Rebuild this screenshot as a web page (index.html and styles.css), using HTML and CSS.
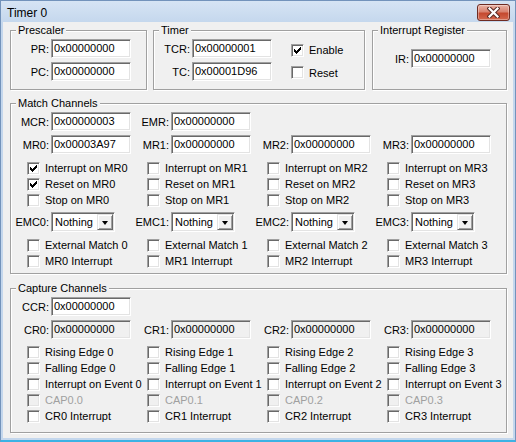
FILE: index.html
```html
<!DOCTYPE html>
<html>
<head>
<meta charset="utf-8">
<title>Timer 0</title>
<link rel="stylesheet" href="styles.css">
</head>
<body>
<div class="window">
  <div class="titlebar">
    <span class="title">Timer 0</span>
    <div class="close">
      <svg width="13" height="11" viewBox="0 0 13 11">
        <path d="M2.5 1.5 L10.5 9.5 M10.5 1.5 L2.5 9.5" stroke="#5a2a24" stroke-width="4.2" stroke-linecap="square" fill="none"/>
        <path d="M2.5 1.5 L10.5 9.5 M10.5 1.5 L2.5 9.5" stroke="#ffffff" stroke-width="2.2" stroke-linecap="square" fill="none"/>
      </svg>
    </div>
  </div>
  <div class="client">
    <div class="row1">
      <div class="group g-pre">
        <div class="gtitle">Prescaler</div>
        <div class="stack">
          <div class="field"><span class="lbl">PR:</span><span class="edit">0x00000000</span></div>
          <div class="field"><span class="lbl">PC:</span><span class="edit">0x00000000</span></div>
        </div>
      </div>
      <div class="group g-timer">
        <div class="gtitle">Timer</div>
        <div class="stack">
          <div class="field"><span class="lbl l36">TCR:</span><span class="edit">0x00000001</span>
            <span class="tchk"><span class="box"><svg width="7" height="7" viewBox="0 0 7 7" shape-rendering="crispEdges"><path fill="#000" d="M6 0h1v1h-1zM5 1h2v1h-2zM0 2h1v1h-1zM4 2h3v1h-3zM0 3h2v1h-2zM3 3h3v1h-3zM0 4h5v1h-5zM1 5h3v1h-3zM2 6h1v1h-1z"/></svg></span>Enable</span>
          </div>
          <div class="field"><span class="lbl l36">TC:</span><span class="edit">0x00001D96</span>
            <span class="tchk tchk2"><span class="box"></span>Reset</span>
          </div>
        </div>
      </div>
      <div class="group g-ir">
        <div class="gtitle">Interrupt Register</div>
        <div class="field irf"><span class="lbl l36">IR:</span><span class="edit">0x00000000</span></div>
      </div>
    </div>

    <div class="group g-match">
      <div class="gtitle">Match Channels</div>
      <div class="grid4 regs">
        <div class="field"><span class="lbl">MCR:</span><span class="edit">0x00000003</span></div>
        <div class="field"><span class="lbl">EMR:</span><span class="edit">0x00000000</span></div>
        <div></div><div></div>
        <div class="field"><span class="lbl">MR0:</span><span class="edit">0x00003A97</span></div>
        <div class="field"><span class="lbl">MR1:</span><span class="edit">0x00000000</span></div>
        <div class="field"><span class="lbl">MR2:</span><span class="edit">0x00000000</span></div>
        <div class="field"><span class="lbl">MR3:</span><span class="edit">0x00000000</span></div>
      </div>
      <div class="grid4 checks mchecks">
        <div class="chk"><span class="box"><svg width="7" height="7" viewBox="0 0 7 7" shape-rendering="crispEdges"><path fill="#000" d="M6 0h1v1h-1zM5 1h2v1h-2zM0 2h1v1h-1zM4 2h3v1h-3zM0 3h2v1h-2zM3 3h3v1h-3zM0 4h5v1h-5zM1 5h3v1h-3zM2 6h1v1h-1z"/></svg></span>Interrupt on MR0</div>
        <div class="chk"><span class="box"></span>Interrupt on MR1</div>
        <div class="chk"><span class="box"></span>Interrupt on MR2</div>
        <div class="chk"><span class="box"></span>Interrupt on MR3</div>
        <div class="chk"><span class="box"><svg width="7" height="7" viewBox="0 0 7 7" shape-rendering="crispEdges"><path fill="#000" d="M6 0h1v1h-1zM5 1h2v1h-2zM0 2h1v1h-1zM4 2h3v1h-3zM0 3h2v1h-2zM3 3h3v1h-3zM0 4h5v1h-5zM1 5h3v1h-3zM2 6h1v1h-1z"/></svg></span>Reset on MR0</div>
        <div class="chk"><span class="box"></span>Reset on MR1</div>
        <div class="chk"><span class="box"></span>Reset on MR2</div>
        <div class="chk"><span class="box"></span>Reset on MR3</div>
        <div class="chk"><span class="box"></span>Stop on MR0</div>
        <div class="chk"><span class="box"></span>Stop on MR1</div>
        <div class="chk"><span class="box"></span>Stop on MR2</div>
        <div class="chk"><span class="box"></span>Stop on MR3</div>
      </div>
      <div class="grid4 emc">
        <div class="field"><span class="lbl">EMC0:</span><span class="combo"><span class="ctext">Nothing</span><span class="cbtn"><span class="tri"></span></span></span></div>
        <div class="field"><span class="lbl">EMC1:</span><span class="combo"><span class="ctext">Nothing</span><span class="cbtn"><span class="tri"></span></span></span></div>
        <div class="field"><span class="lbl">EMC2:</span><span class="combo"><span class="ctext">Nothing</span><span class="cbtn"><span class="tri"></span></span></span></div>
        <div class="field"><span class="lbl">EMC3:</span><span class="combo"><span class="ctext">Nothing</span><span class="cbtn"><span class="tri"></span></span></span></div>
      </div>
      <div class="grid4 checks mext">
        <div class="chk"><span class="box"></span>External Match 0</div>
        <div class="chk"><span class="box"></span>External Match 1</div>
        <div class="chk"><span class="box"></span>External Match 2</div>
        <div class="chk"><span class="box"></span>External Match 3</div>
        <div class="chk"><span class="box"></span>MR0 Interrupt</div>
        <div class="chk"><span class="box"></span>MR1 Interrupt</div>
        <div class="chk"><span class="box"></span>MR2 Interrupt</div>
        <div class="chk"><span class="box"></span>MR3 Interrupt</div>
      </div>
    </div>

    <div class="group g-cap">
      <div class="gtitle">Capture Channels</div>
      <div class="grid4 regs">
        <div class="field"><span class="lbl">CCR:</span><span class="edit">0x00000000</span></div>
        <div></div><div></div><div></div>
        <div class="field"><span class="lbl">CR0:</span><span class="edit ro">0x00000000</span></div>
        <div class="field"><span class="lbl">CR1:</span><span class="edit ro">0x00000000</span></div>
        <div class="field"><span class="lbl">CR2:</span><span class="edit ro">0x00000000</span></div>
        <div class="field"><span class="lbl">CR3:</span><span class="edit ro">0x00000000</span></div>
      </div>
      <div class="grid4 checks cchecks">
        <div class="chk"><span class="box"></span>Rising Edge 0</div>
        <div class="chk"><span class="box"></span>Rising Edge 1</div>
        <div class="chk"><span class="box"></span>Rising Edge 2</div>
        <div class="chk"><span class="box"></span>Rising Edge 3</div>
        <div class="chk"><span class="box"></span>Falling Edge 0</div>
        <div class="chk"><span class="box"></span>Falling Edge 1</div>
        <div class="chk"><span class="box"></span>Falling Edge 2</div>
        <div class="chk"><span class="box"></span>Falling Edge 3</div>
        <div class="chk"><span class="box"></span>Interrupt on Event 0</div>
        <div class="chk"><span class="box"></span>Interrupt on Event 1</div>
        <div class="chk"><span class="box"></span>Interrupt on Event 2</div>
        <div class="chk"><span class="box"></span>Interrupt on Event 3</div>
        <div class="chk dis"><span class="box"></span>CAP0.0</div>
        <div class="chk dis"><span class="box"></span>CAP0.1</div>
        <div class="chk dis"><span class="box"></span>CAP0.2</div>
        <div class="chk dis"><span class="box"></span>CAP0.3</div>
        <div class="chk"><span class="box"></span>CR0 Interrupt</div>
        <div class="chk"><span class="box"></span>CR1 Interrupt</div>
        <div class="chk"><span class="box"></span>CR2 Interrupt</div>
        <div class="chk"><span class="box"></span>CR3 Interrupt</div>
      </div>
    </div>
  </div>
</div>
</body>
</html>
```

FILE: styles.css
```css
* { box-sizing: border-box; }
html, body { margin: 0; padding: 0; }
body {
  width: 516px;
  height: 442px;
  overflow: hidden;
  font-family: "Liberation Sans", Arial, sans-serif;
  font-size: 11px;
  color: #000;
  background: #c5d8ee;
}
.window {
  width: 516px;
  height: 442px;
  border: 1px solid #7393bb;
  border-bottom: 2px solid #3cb2e4;
  background: linear-gradient(#d6e4f4, #c4d7ed 22px, #c4d7ed);
  display: flex;
  flex-direction: column;
  padding: 0 2px 2px 2px;
}
.titlebar {
  height: 21px;
  flex: none;
  display: flex;
  align-items: center;
  justify-content: space-between;
  padding: 2px 3px 0 4px;
}
.title {
  font-size: 12px;
  color: #000;
}
.close {
  width: 33px;
  height: 17px;
  border: 1px solid #6e2b22;
  border-radius: 3px;
  background: linear-gradient(#eab3a6, #d9826f 45%, #c5492f 55%, #d3684e);
  box-shadow: inset 0 0 0 1px rgba(255,255,255,0.35);
  display: flex;
  align-items: center;
  justify-content: center;
}
.close svg { display: block; }
.client {
  flex: 1;
  background: #f0f0f0;
  padding: 8px 6px 0 7px;
}
.row1 {
  display: flex;
}
.group {
  border: 1px solid #a0a0a0;
  box-shadow: inset 1px 1px 0 #fff, 1px 1px 0 #fff;
}
.gtitle {
  margin: -7px 0 0 5px;
  padding: 0 2px;
  background: #f0f0f0;
  width: max-content;
  height: 13px;
  line-height: 13px;
}
.g-pre { width: 137px; height: 60px; margin-right: 6px; }
.g-timer { width: 212px; height: 60px; margin-right: 7px; }
.g-ir { width: 135px; height: 60px; }
.stack {
  margin-top: 2px;
  display: flex;
  flex-direction: column;
  gap: 4px;
}
.field {
  display: flex;
  align-items: center;
  white-space: nowrap;
}
.lbl {
  width: 38px;
  text-align: right;
  margin-right: 2px;
  flex: none;
}
.lbl.l36 { width: 36px; }
.edit {
  width: 80px;
  height: 19px;
  flex: none;
  border: 1px solid;
  border-color: #a0a0a0 #ffffff #ffffff #a0a0a0;
  box-shadow: inset 1px 1px 0 #696969, inset -1px -1px 0 #e3e3e3;
  background: #fff;
  padding-left: 2px;
  line-height: 17px;
}
.edit.ro { background: #f0f0f0; }
.irf { margin-top: 12px; }
.tchk {
  display: flex;
  align-items: center;
  margin-left: 19px;
  margin-top: 3px;
}
.tchk2 { margin-top: 2px; }
.box {
  width: 13px;
  height: 13px;
  flex: none;
  margin-right: 5px;
  border: 1px solid;
  border-color: #a0a0a0 #ffffff #ffffff #a0a0a0;
  box-shadow: inset 1px 1px 0 #696969, inset -1px -1px 0 #e3e3e3;
  background: #fff;
  padding: 2px;
}
.box svg { display: block; }
.g-match { height: 171px; margin-top: 13px; }
.g-cap { height: 145px; margin-top: 14px; }
.grid4 {
  display: grid;
  grid-template-columns: repeat(4, 120px);
}
.regs { margin-top: 2px; row-gap: 4px; }
.checks { grid-auto-rows: 16px; }
.mchecks { margin-top: 6px; }
.mext { margin-top: 5px; }
.cchecks { margin-top: 5px; }
.chk {
  display: flex;
  align-items: center;
  padding-left: 16px;
  white-space: nowrap;
}
.chk.dis { color: #a0a0a0; }
.chk.dis .box { background: #f0f0f0; }
.emc { margin-top: 4px; }
.combo {
  width: 64px;
  height: 20px;
  flex: none;
  display: flex;
  border: 1px solid;
  border-color: #a0a0a0 #ffffff #ffffff #a0a0a0;
  box-shadow: inset 1px 1px 0 #696969, inset -1px -1px 0 #e3e3e3;
  background: #fff;
  padding: 1px;
}
.ctext {
  flex: 1;
  padding-left: 2px;
  line-height: 16px;
}
.cbtn {
  width: 16px;
  height: 16px;
  flex: none;
  border: 1px solid;
  border-color: #e3e3e3 #696969 #696969 #e3e3e3;
  box-shadow: inset 1px 1px 0 #fff, inset -1px -1px 0 #a0a0a0;
  background: #f0f0f0;
  display: flex;
  align-items: center;
  justify-content: center;
}
.tri {
  width: 0;
  height: 0;
  border-left: 3.5px solid transparent;
  border-right: 3.5px solid transparent;
  border-top: 4px solid #000;
  margin-top: 1px;
}
```
